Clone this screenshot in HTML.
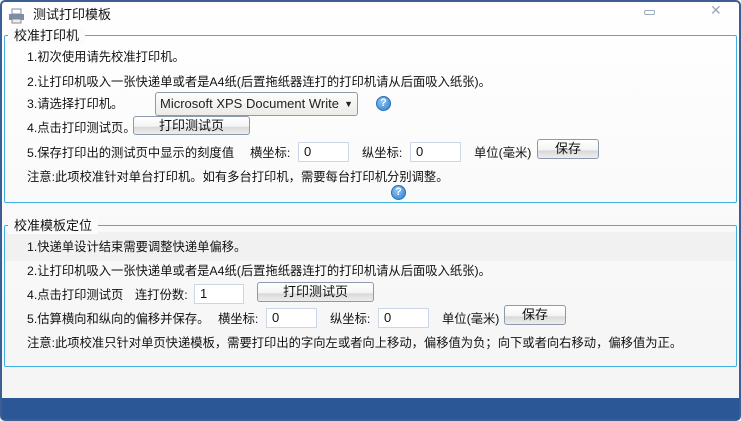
<!DOCTYPE html>
<html><head><meta charset="utf-8"><style>
*{margin:0;padding:0;box-sizing:border-box}
body{width:741px;height:421px;overflow:hidden;background:#fff;font-family:"Liberation Sans","Noto Sans CJK SC",sans-serif;font-size:12.3px;color:#111;position:relative}
.a{position:absolute;white-space:nowrap;line-height:14px}
.win{position:absolute;left:0;top:0;width:741px;height:421px;border:2px solid #3b5f93;border-radius:5px;background:linear-gradient(#fff,#f4f4f4)}
.grp{position:absolute;border:1px solid #3fb0e0;border-radius:2px}
.lbl{position:absolute;background:#fbfbfb;padding:0 6px;font-size:13px;line-height:16px}
.btn{position:absolute;border:1px solid #8d9aae;border-radius:3px;background:linear-gradient(#fff 0,#f4f4f4 55%,#d9d9d9 60%,#eee 100%);text-align:center;font-size:13px;line-height:18px}
.inp{position:absolute;border:1px solid #c9d7e6;background:#fff;height:20px;padding-left:5px;font-size:13px;line-height:18px}
.q{position:absolute;width:15px;height:15px;border-radius:50%;background:radial-gradient(circle at 40% 35%,#8cc4f2,#2d7fd0);border:1px solid #2a6bb0;color:#fff;font-weight:bold;font-size:11px;line-height:13px;text-align:center}
</style></head><body>
<div class="win"></div>
<svg class="a" style="left:8px;top:8px" width="17" height="16"><rect x="4" y="1" width="9" height="5" fill="#fff" stroke="#889"/><rect x="1" y="6" width="15" height="6" fill="#7d8ea3"/><rect x="4" y="11" width="9" height="4" fill="#eee" stroke="#889"/></svg>
<div class="a" style="left:33px;top:8px;font-size:13px">测试打印模板</div>
<div class="a" style="left:644px;top:10px;width:11px;height:5px;border:1px solid #9ab;border-radius:2px"></div>
<div class="a" style="left:710px;top:3px;color:#9ab;font-size:14px">✕</div>

<div class="grp" style="left:4px;top:35px;width:733px;height:168px"></div>
<div class="lbl" style="left:8px;top:28px">校准打印机</div>
<div class="a" style="left:27px;top:50px">1.初次使用请先校准打印机。</div>
<div class="a" style="left:27px;top:75px">2.让打印机吸入一张快递单或者是A4纸(后置拖纸器连打的打印机请从后面吸入纸张)。</div>
<div class="a" style="left:27px;top:97px">3.请选择打印机。</div>
<div class="a" style="left:155px;top:92px;width:203px;height:24px;border:1px solid #8d9aae;border-radius:3px;background:linear-gradient(#fdfdfd,#ecebe6);font-size:13px;line-height:22px;padding-left:4px;color:#222">Microsoft XPS Document Write<span style="position:absolute;right:4px;font-size:9px">▼</span></div>
<div class="q" style="left:376px;top:96px">?</div>
<div class="a" style="left:27px;top:121px">4.点击打印测试页。</div>
<div class="btn" style="left:133px;top:116px;width:117px;height:19px">打印测试页</div>
<div class="a" style="left:27px;top:146px">5.保存打印出的测试页中显示的刻度值</div>
<div class="a" style="left:250px;top:146px">横坐标:</div>
<div class="inp" style="left:298px;top:142px;width:51px">0</div>
<div class="a" style="left:362px;top:146px">纵坐标:</div>
<div class="inp" style="left:410px;top:142px;width:51px">0</div>
<div class="a" style="left:474px;top:146px">单位(毫米)</div>
<div class="btn" style="left:537px;top:139px;width:62px;height:20px">保存</div>
<div class="a" style="left:27px;top:170px">注意:此项校准针对单台打印机。如有多台打印机，需要每台打印机分别调整。</div>
<div class="q" style="left:391px;top:185px">?</div>

<div class="a" style="left:5px;top:232px;width:732px;height:29px;background:#f1f1f1"></div>
<div class="grp" style="left:4px;top:225px;width:733px;height:142px"></div>
<div class="lbl" style="left:8px;top:218px">校准模板定位</div>
<div class="a" style="left:27px;top:240px">1.快递单设计结束需要调整快递单偏移。</div>
<div class="a" style="left:27px;top:264px">2.让打印机吸入一张快递单或者是A4纸(后置拖纸器连打的打印机请从后面吸入纸张)。</div>
<div class="a" style="left:27px;top:288px">4.点击打印测试页</div>
<div class="a" style="left:135px;top:288px">连打份数:</div>
<div class="inp" style="left:194px;top:284px;width:50px">1</div>
<div class="btn" style="left:257px;top:282px;width:117px;height:20px">打印测试页</div>
<div class="a" style="left:27px;top:312px">5.估算横向和纵向的偏移并保存。</div>
<div class="a" style="left:218px;top:312px">横坐标:</div>
<div class="inp" style="left:266px;top:308px;width:51px">0</div>
<div class="a" style="left:330px;top:312px">纵坐标:</div>
<div class="inp" style="left:378px;top:308px;width:51px">0</div>
<div class="a" style="left:442px;top:312px">单位(毫米)</div>
<div class="btn" style="left:504px;top:305px;width:62px;height:20px">保存</div>
<div class="a" style="left:27px;top:336px">注意:此项校准只针对单页快递模板，需要打印出的字向左或者向上移动，偏移值为负；向下或者向右移动，偏移值为正。</div>

<div class="a" style="left:2px;top:398px;width:737px;height:21px;background:#2c5797"></div>
</body></html>
